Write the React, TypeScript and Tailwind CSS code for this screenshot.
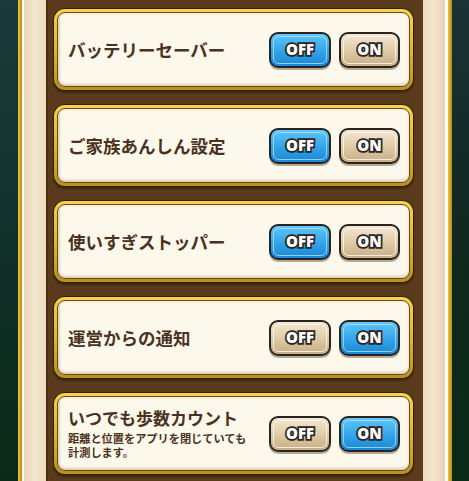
import React from 'react';

type Row = {
  title: string;
  note?: string;
  on: boolean;
};

const rows: Row[] = [
  { title: 'バッテリーセーバー', on: false },
  { title: 'ご家族あんしん設定', on: false },
  { title: '使いすぎストッパー', on: false },
  { title: '運営からの通知', on: true },
  { title: 'いつでも歩数カウント', note: '距離と位置をアプリを閉じていても計測します。', on: true },
];

const jp = "font-['Noto_Sans_CJK_JP','Noto_Sans',sans-serif]";

const ToggleButton = ({ label, active }: { label: string; active: boolean }) => (
  <div
    className={`relative flex h-[36px] items-center justify-center rounded-[9px] border-2 border-[#2a2420] shadow-[0_2px_0_rgba(40,25,10,0.35)] ${
      active
        ? 'bg-gradient-to-b from-[#62c6f7] via-[#34a6ec] to-[#1b86d4]'
        : 'bg-gradient-to-b from-[#f3e8d3] via-[#e0cca8] to-[#c9ad84]'
    } ${label === 'OFF' ? 'w-[62px]' : 'w-[61px]'}`}
  >
    <span
      className={`pointer-events-none absolute inset-[2px] rounded-[6px] border ${
        active ? 'border-[#a9e2ff]/80' : 'border-[#fbf4e6]/90'
      }`}
    />
    <span className="relative font-['Open_Sans',sans-serif] text-[15px] leading-none font-extrabold text-white [-webkit-text-stroke:3.5px_#2b2420] [paint-order:stroke_fill]">
      {label}
    </span>
  </div>
);

const SettingCard = ({ row }: { row: Row }) => (
  <div className="h-[83px] rounded-[12px] bg-[#35200b] p-[1px] shadow-[0_2px_2px_rgba(20,10,0,0.4)]">
    <div className="h-full rounded-[11px] bg-gradient-to-b from-[#f2d54a] via-[#dcb92a] to-[#b8921c] p-[3px]">
      <div className="flex h-full items-center rounded-[8px] border border-[#6b4a20] bg-[#fdf8ec] pr-[9px] pl-[10px] shadow-[inset_0_-2px_3px_rgba(120,90,40,0.25),inset_2px_0_2px_rgba(120,90,40,0.15)]">
        <div className={`flex-1 ${jp} text-[#4a3220]`}>
          <div className={`font-bold ${row.note ? 'text-[17px] leading-[20px]' : 'text-[17.5px] leading-[22px]'}`}>
            {row.title}
          </div>
          {row.note && (
            <div className="mt-[3px] w-[182px] text-[11.2px] leading-[14px] font-bold">{row.note}</div>
          )}
        </div>
        <div className="flex gap-[8px]">
          <ToggleButton label="OFF" active={!row.on} />
          <ToggleButton label="ON" active={row.on} />
        </div>
      </div>
    </div>
  </div>
);

export default function App() {
  return (
    <div className="flex h-[481px] w-[469px] overflow-hidden bg-[#5a3a1a]">
      {/* outside scene + frame, left */}
      <div className="w-[18px] bg-gradient-to-b from-[#1c3a3a] via-[#12302a] to-[#0b2a18]" />
      <div className="w-[4px] bg-gradient-to-r from-[#f0c43a] to-[#b8891c]" />
      <div className="w-[2px] bg-[#fdfbf6]" />
      <div className="w-[22px] bg-gradient-to-r from-[#e7d7bb] via-[#f3e5cb] to-[#eddcc0]" />

      <div className="flex w-[377px] flex-col gap-[13px] border-l-2 border-[#4a2e12] bg-[#5b3b1b] pt-[8px] pr-[9px] pl-[5px]">
        {rows.map((row) => (
          <SettingCard key={row.title} row={row} />
        ))}
      </div>

      {/* frame, right */}
      <div className="w-[22px] bg-gradient-to-r from-[#eddcc0] via-[#f3e5cb] to-[#e5d3b5]" />
      <div className="w-[3px] bg-[#fdfbf6]" />
      <div className="w-[4px] bg-gradient-to-r from-[#f0c43a] to-[#b8891c]" />
      <div className="w-[17px] bg-gradient-to-b from-[#1a3234] via-[#10281f] to-[#0a2a16]" />
    </div>
  );
}
